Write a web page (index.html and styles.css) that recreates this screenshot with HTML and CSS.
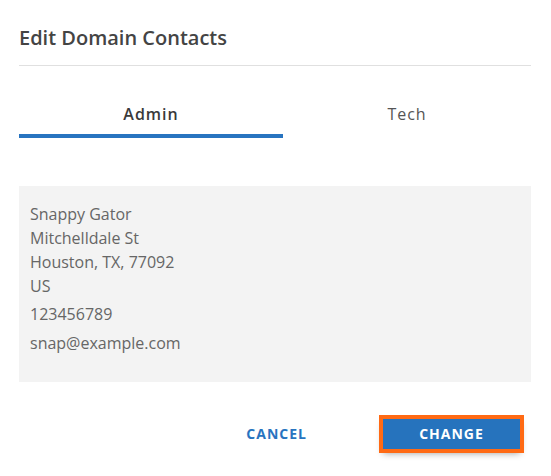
FILE: index.html
```html
<!DOCTYPE html>
<html lang="en">
<head>
<meta charset="utf-8">
<title>Edit Domain Contacts</title>
<link rel="stylesheet" href="styles.css">
</head>
<body>
<div class="modal">
  <div class="modal-header">
    <h2 class="modal-title">Edit Domain Contacts</h2>
  </div>
  <div class="tabs">
    <div class="tab tab-active">Admin</div>
    <div class="tab">Tech</div>
  </div>
  <div class="contact-card">
    <p class="address">Snappy Gator<br>Mitchelldale St<br>Houston, TX, 77092<br>US</p>
    <p class="contact-line">123456789</p>
    <p class="contact-line email">snap@example.com</p>
  </div>
  <div class="modal-footer">
    <button class="btn btn-text">CANCEL</button>
    <button class="btn btn-primary">CHANGE</button>
  </div>
</div>
</body>
</html>
```

FILE: styles.css
```css
html, body {
  margin: 0;
  padding: 0;
  background: #ffffff;
}

body {
  font-family: "Open Sans", "Noto Sans", sans-serif;
  color: #444444;
  min-height: 476px;
}

.modal {
  width: 551px;
  box-sizing: border-box;
  padding: 0 20px 27px 19px;
}

.modal-header {
  padding: 25px 0 14px;
  border-bottom: 1px solid #e0e0e0;
}

.modal-title {
  margin: 0;
  font-size: 20px;
  line-height: 26px;
  font-weight: 600;
  color: #444444;
}

.tabs {
  display: flex;
  margin-top: 37px;
}

.tab {
  flex: 1 1 auto;
  text-align: center;
  font-size: 16px;
  line-height: 22px;
  letter-spacing: 1px;
  color: #555555;
  padding: 0 0 9px;
  border-bottom: 4px solid transparent;
}

.tab-active {
  font-weight: 600;
  color: #3a3a3a;
  border-bottom-color: #2874c0;
}

.contact-card {
  margin-top: 48px;
  background: #f3f3f3;
  padding: 16px 12px 27px 11px;
  color: #666666;
  font-size: 16px;
  line-height: 24px;
}

.contact-card p {
  margin: 0;
}

.contact-line {
  margin-top: 4px !important;
}

.contact-line.email {
  margin-top: 5px !important;
}

.modal-footer {
  display: flex;
  justify-content: flex-end;
  align-items: center;
  margin-top: 37px;
  padding-right: 11px;
  gap: 56px;
}

.btn {
  font-family: "Open Sans", "Noto Sans", sans-serif;
  font-size: 14px;
  font-weight: 700;
  letter-spacing: 1px;
  border: 0;
  height: 30px;
  line-height: 30px;
  padding: 0;
  cursor: pointer;
}

.btn-text {
  background: transparent;
  color: #2874c0;
  padding: 0 20px;
}

.btn-primary {
  width: 137px;
  background: #2673bd;
  color: #ffffff;
  outline: 4px solid #ff6a14;
  box-shadow: 0 4px 7px rgba(0, 0, 0, 0.4);
}
```
